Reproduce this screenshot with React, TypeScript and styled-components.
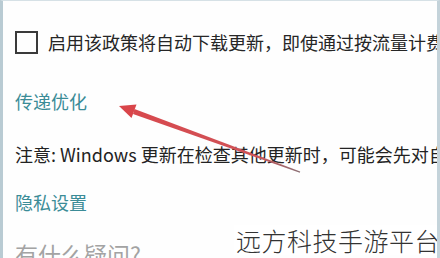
import React from "react";
import styled, { createGlobalStyle } from "styled-components";

export default function App() {
  return (
    <>
      <GlobalStyle />
      <Panel>
        <CheckRow>
          <CheckBox />
          <Label>启用该政策将自动下载更新，即使通过按流量计费的连接</Label>
        </CheckRow>
        <LinkText $gap={35}>传递优化</LinkText>
        <Note>注意: Windows 更新在检查其他更新时，可能会先对自己进行更新。</Note>
        <LinkText $gap={24}>隐私设置</LinkText>
        <Heading>有什么疑问?</Heading>

        <Arrow viewBox="0 0 440 258">
          <defs>
            <linearGradient id="shaft" x1="119" y1="106" x2="300" y2="172" gradientUnits="userSpaceOnUse">
              <stop offset="0" stopColor="#d9474c" />
              <stop offset="0.75" stopColor="#cf5358" />
              <stop offset="1" stopColor="#8a7075" />
            </linearGradient>
          </defs>
          <polygon points="119,106 136.5,104.5 131.5,118" fill="#d9454a" />
          <polygon points="134.5,109 133,114 299.8,172.8 300.2,171.4" fill="url(#shaft)" />
        </Arrow>

        <Watermark>远方科技手游平台</Watermark>
      </Panel>
    </>
  );
}

const GlobalStyle = createGlobalStyle`
  body {
    margin: 0;
    background: #ffffff;
  }
`

const Panel = styled.div`
  position: relative;
  width: 440px;
  height: 258px;
  box-sizing: border-box;
  overflow: hidden;
  background: #fefefe;
  border-left: 3px solid #b9cbd3;
  border-right: 3px solid #c4d3da;
  border-top: 1px solid #d6e1e6;
  padding-left: 12px;
  display: flex;
  flex-direction: column;
  font-family: "Noto Sans CJK SC", "Noto Sans", sans-serif;
  white-space: nowrap;
`

const CheckRow = styled.div`
  display: flex;
  align-items: center;
  gap: 10px;
  margin-top: 29px;
  height: 24px;
`

const CheckBox = styled.div`
  width: 23px;
  height: 23px;
  box-sizing: border-box;
  border: 2px solid #3a3a3a;
  flex-shrink: 0;
`

const Label = styled.span`
  font-size: 18px;
  line-height: 24px;
  color: #262626;
`

const LinkText = styled.div<{ $gap: number }>`
  margin-top: ${(p) => p.$gap}px;
  font-size: 18px;
  line-height: 24px;
  color: #3b8c97;
`

const Note = styled.div`
  margin-top: 29px;
  font-size: 18px;
  line-height: 24px;
  color: #232323;
`

const Heading = styled.div`
  margin-top: 25px;
  font-size: 23px;
  line-height: 30px;
  color: #a3a3a3;
`

const Arrow = styled.svg`
  position: absolute;
  left: -3px;
  top: -1px;
  width: 440px;
  height: 258px;
  pointer-events: none;
`

const Watermark = styled.div`
  position: absolute;
  right: -3px;
  top: 224px;
  padding: 0 0 0 2px;
  background: rgba(255, 255, 255, 0.85);
  font-size: 25px;
  line-height: 30px;
  font-weight: 300;
  letter-spacing: 0.5px;
  color: #333333;
`
